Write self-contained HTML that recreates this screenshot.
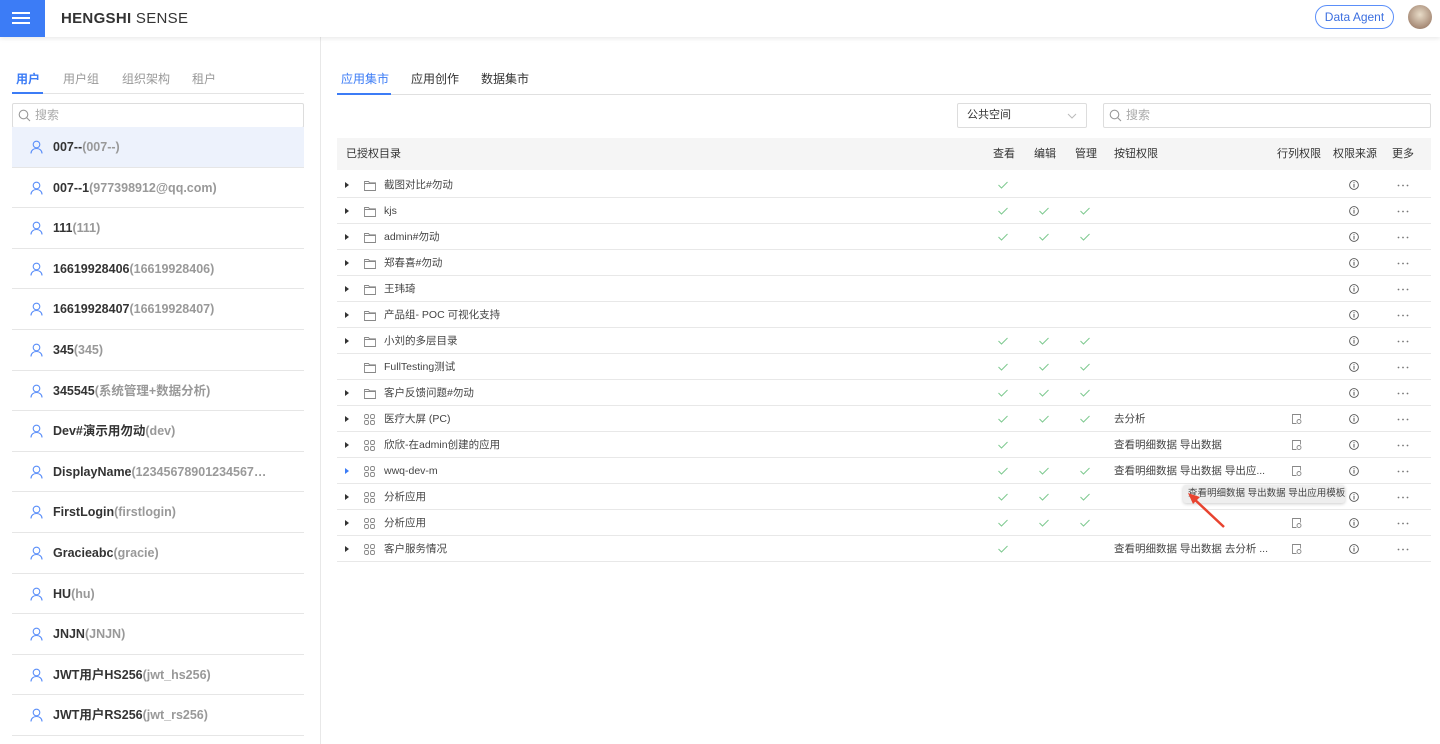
<!DOCTYPE html>
<html><head><meta charset="utf-8"><style>
*{box-sizing:border-box;margin:0;padding:0}
body{width:1440px;height:744px;overflow:hidden;background:#fff;font-family:"Liberation Sans","Noto Sans CJK SC",sans-serif;color:#333;position:relative}
.hdr{position:absolute;left:0;top:0;width:1440px;height:37px;background:#fff;box-shadow:0 2px 4px rgba(0,0,0,.08);z-index:2}
.menu{position:absolute;left:0;top:0;width:45px;height:37px;background:#3c7cf6}
.menu i{position:absolute;left:12px;width:18px;height:2px;background:#fff}
.logo{position:absolute;left:61px;top:10px;font-size:15px;color:#333;letter-spacing:.3px}
.agent{position:absolute;left:1315px;top:5px;width:79px;height:24px;border:1px solid #5b8ff9;border-radius:12px;font-size:12px;color:#3c6fe0;text-align:center;line-height:22px}
.av{position:absolute;left:1408px;top:5px;width:24px;height:24px;border-radius:50%;background:radial-gradient(circle at 50% 40%,#e8dcc8,#a88c78 70%,#7a6050)}
.left{position:absolute;left:0;top:37px;width:321px;height:707px;border-right:1px solid #e8e8e8}
.tabs{position:absolute;top:70px;font-size:12px;color:#999}
.tabs span{position:absolute;white-space:nowrap}
.search{position:absolute;height:25px;border:1px solid #ddd;border-radius:2px;font-size:12px;color:#aaa;line-height:23px;padding-left:22px}
.search svg{position:absolute;left:5px;top:5px}
.item{position:absolute;left:12px;width:292px;height:40.6px;border-bottom:1px solid #e6e6e6;font-size:12.5px;font-weight:bold;color:#333;line-height:40px;padding-left:41px;white-space:nowrap;overflow:hidden}
.item b{font-weight:bold;color:#999}
.item svg{position:absolute;left:18px;top:13px}
.thead{position:absolute;left:337px;top:138px;width:1094px;height:32px;background:#f5f5f5;font-size:11px;color:#333}
.thead span{position:absolute;top:0;line-height:32px;white-space:nowrap}
.row{position:absolute;left:337px;width:1094px;height:26px;border-bottom:1px solid #e8e8e8;font-size:10.5px;color:#444}
.row span{position:absolute;top:0;line-height:26px;white-space:nowrap}
.row svg{position:absolute}
</style></head><body>
<div class="hdr">
 <div class="menu"><i style="top:12px"></i><i style="top:17px"></i><i style="top:22px"></i></div>
 <div class="logo"><b>HENGSHI</b> SENSE</div>
 <div class="agent">Data Agent</div>
 <div class="av"></div>
</div>
<div class="left">
 <div class="tabs" style="left:0;top:33px"><span style="left:16px;color:#3c7cf6;font-weight:bold">用户</span><span style="left:63px">用户组</span><span style="left:122px">组织架构</span><span style="left:192px">租户</span></div>
 <div style="position:absolute;left:12px;top:56px;width:292px;height:1px;background:#e4e4e4"></div>
 <div style="position:absolute;left:12px;top:55px;width:31px;height:2px;background:#3c7cf6"></div>
 <div class="search" style="left:12px;top:66px;width:292px"><svg width="13" height="13" viewBox="0 0 13 13"><circle cx="5.5" cy="5.5" r="4.3" fill="none" stroke="#999" stroke-width="1.1"/><path d="M8.6 8.6L12 12" stroke="#999" stroke-width="1.1"/></svg>搜索</div>
</div>
<div id="list"></div>
<div class="tabs" style="left:0;top:70px;font-size:12px;color:#333"><span style="left:341px;color:#3c7cf6">应用集市</span><span style="left:411px">应用创作</span><span style="left:481px">数据集市</span></div>
<div style="position:absolute;left:337px;top:94px;width:1094px;height:1px;background:#e0e0e0"></div>
<div style="position:absolute;left:337px;top:93px;width:54px;height:2px;background:#3c7cf6"></div>
<div class="search" style="left:957px;top:103px;width:130px;color:#333;font-size:11px;padding-left:9px">公共空间<svg style="left:auto;right:9px;top:9px" width="10" height="6" viewBox="0 0 10 6"><path d="M1 1l4 4 4-4" fill="none" stroke="#bbb"/></svg></div>
<div class="search" style="left:1103px;top:103px;width:328px"><svg width="13" height="13" viewBox="0 0 13 13"><circle cx="5.5" cy="5.5" r="4.3" fill="none" stroke="#999" stroke-width="1.1"/><path d="M8.6 8.6L12 12" stroke="#999" stroke-width="1.1"/></svg>搜索</div>
<div class="thead"><span style="left:9px">已授权目录</span><span style="left:656px">查看</span><span style="left:697px">编辑</span><span style="left:738px">管理</span><span style="left:777px">按钮权限</span><span style="left:940px">行列权限</span><span style="left:996px">权限来源</span><span style="left:1055px">更多</span></div>
<div id="rows"></div>
<div style="position:absolute;left:1183px;top:485px;width:162px;height:18px;background:#eee;border-radius:3px;box-shadow:0 1px 3px rgba(0,0,0,.2);font-size:9.5px;color:#444;line-height:18px;padding-left:5px;white-space:nowrap">查看明细数据 导出数据 导出应用模板</div>
<svg style="position:absolute;left:1180px;top:485px" width="50" height="45"><path d="M44 42L12 12" stroke="#e8432f" stroke-width="2.5"/><path d="M8 8L20 12L13 19Z" fill="#e8432f"/></svg>
<script>
var users=[["007--","(007--)"],["007--1","(977398912@qq.com)"],["111","(111)"],["16619928406","(16619928406)"],["16619928407","(16619928407)"],["345","(345)"],["345545","(系统管理+数据分析)"],["Dev#演示用勿动","(dev)"],["DisplayName","(12345678901234567…"],["FirstLogin","(firstlogin)"],["Gracieabc","(gracie)"],["HU","(hu)"],["JNJN","(JNJN)"],["JWT用户HS256","(jwt_hs256)"],["JWT用户RS256","(jwt_rs256)"]];
var h="";users.forEach(function(u,i){h+='<div class="item" style="top:'+(127+i*40.6)+'px;'+(i==0?'background:#edf2fc;':'')+'"><svg width="13" height="14" viewBox="0 0 13 14"><circle cx="6.5" cy="4.5" r="3.3" fill="none" stroke="#5b8ff9" stroke-width="1.1"/><path d="M1 13.5c0-3.2 2.5-5 5.5-5s5.5 1.8 5.5 5" fill="none" stroke="#5b8ff9" stroke-width="1.1"/></svg>'+u[0]+'<b>'+u[1]+'</b></div>'});
document.getElementById("list").innerHTML=h;
var F='<svg style="left:27px;top:8px" width="12" height="11" viewBox="0 0 12 11"><path d="M.5 1.5h4l1 1.3h6v7.7H.5z M.5 3.5h11" fill="none" stroke="#888" stroke-width=".9"/></svg>';
var A='<svg style="left:27px;top:8px" width="11" height="11" viewBox="0 0 11 11" fill="none" stroke="#888" stroke-width=".9"><rect x=".5" y=".5" width="4" height="4" rx="1.5"/><rect x="6.5" y=".5" width="4" height="4" rx="1.5"/><rect x=".5" y="6.5" width="4" height="4" rx="1.5"/><rect x="6.5" y="6.5" width="4" height="4" rx="1.5"/></svg>';
function ck(x){return '<svg style="left:'+x+'px;top:9px" width="10" height="8" viewBox="0 0 10 8"><path d="M.5 4l3 3L9.5 1" fill="none" stroke="#7dc98f" stroke-width="1"/></svg>'}
var rows=[[1,F,"截图对比#勿动",1,0,0,""],[1,F,"kjs",1,1,1,""],[1,F,"admin#勿动",1,1,1,""],[1,F,"郑春喜#勿动",0,0,0,""],[1,F,"王玮琦",0,0,0,""],[1,F,"产品组- POC 可视化支持",0,0,0,""],[1,F,"小刘的多层目录",1,1,1,""],[0,F,"FullTesting测试",1,1,1,""],[1,F,"客户反馈问题#勿动",1,1,1,""],[1,A,"医疗大屏 (PC)",1,1,1,"去分析",1],[1,A,"欣欣-在admin创建的应用",1,0,0,"查看明细数据 导出数据",1],[2,A,"wwq-dev-m",1,1,1,"查看明细数据 导出数据 导出应...",1],[1,A,"分析应用",1,1,1,"",1],[1,A,"分析应用",1,1,1,"",1],[1,A,"客户服务情况",1,0,0,"查看明细数据 导出数据 去分析 ...",1]];
var r="";rows.forEach(function(o,i){var t=172+i*26;r+='<div class="row" style="top:'+t+'px">';
if(o[0])r+='<svg style="left:8px;top:10px" width="4" height="6"><path d="M0 0L4 3L0 6Z" fill="'+(o[0]==2?'#3c7cf6':'#333')+'"/></svg>';
r+=o[1]+'<span style="left:47px">'+o[2]+'</span>';
if(o[3])r+=ck(661);if(o[4])r+=ck(702);if(o[5])r+=ck(743);
r+='<span style="left:777px">'+o[6]+'</span>';
if(o[7])r+='<svg style="left:955px;top:8px" width="10" height="10" viewBox="0 0 10 10" fill="none" stroke="#888" stroke-width=".9"><path d="M8.5 4.5V.5h-8v9h4"/><circle cx="7" cy="7.5" r="2"/></svg>';
r+='<svg style="left:1012px;top:8px" width="10" height="10" viewBox="0 0 10 10"><circle cx="5" cy="5" r="4.4" fill="none" stroke="#555" stroke-width=".9"/><path d="M5 4v3.5M5 2.3v.9" stroke="#555" stroke-width="1"/></svg><svg style="left:1060px;top:12px" width="12" height="3"><circle cx="1.5" cy="1.5" r=".9" fill="#777"/><circle cx="6" cy="1.5" r=".9" fill="#777"/><circle cx="10.5" cy="1.5" r=".9" fill="#777"/></svg></div>'});
document.getElementById("rows").innerHTML=r;
</script>
</body></html>
